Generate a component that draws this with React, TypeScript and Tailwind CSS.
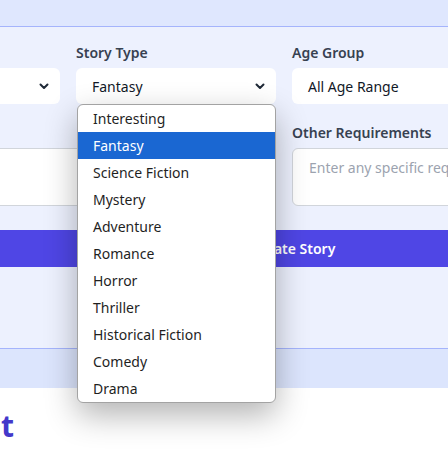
import type { ReactNode } from 'react';

const storyTypes = [
  'Interesting',
  'Fantasy',
  'Science Fiction',
  'Mystery',
  'Adventure',
  'Romance',
  'Horror',
  'Thriller',
  'Historical Fiction',
  'Comedy',
  'Drama',
];

function Chevron() {
  return (
    <svg width="12" height="12" viewBox="0 0 12 12" className="shrink-0">
      <path d="M2.5 4.5 6 8l3.5-3.5" fill="none" stroke="#1f2937" strokeWidth="2" strokeLinecap="round" strokeLinejoin="round" />
    </svg>
  );
}

function Field({ label, children, className = '' }: { label?: string; children: ReactNode; className?: string }) {
  return (
    <div className={`flex flex-col ${className}`}>
      <label className="mb-[5px] h-[21px] whitespace-nowrap text-[14px] font-semibold leading-[21px] text-[#374151]">{label}</label>
      {children}
    </div>
  );
}

function SelectBox({ value, chevron = true }: { value: string; chevron?: boolean }) {
  return (
    <div className="flex h-[36px] items-center justify-between rounded-md bg-white pl-4 pr-[10px] text-[14px] text-[#111827]">
      <span>{value}</span>
      {chevron && <Chevron />}
    </div>
  );
}

export default function App() {
  return (
    <div className="relative h-[459px] w-[448px] overflow-hidden bg-white font-['Noto_Sans',sans-serif]">
      <div className="h-[27px] border-b border-[#a5b4fc] bg-[#dfe7fe]" />
      <section className="h-[321px] bg-[#edf1fe]">
        <div className="ml-[-140px] w-[848px] pt-[15px]">
          <div className="grid grid-cols-4 gap-x-4">
            <Field label="Genre">
              <SelectBox value="Kids" />
            </Field>
            <Field label="Story Type">
              <SelectBox value="Fantasy" />
            </Field>
            <Field label="Age Group">
              <SelectBox value="All Age Range" />
            </Field>
            <Field label="Length">
              <SelectBox value="Short" />
            </Field>
          </div>
          <div className="mt-[18px] grid grid-cols-2 gap-x-4">
            <Field label="Story Prompt">
              <div className="h-[58px] rounded-md border border-[#d1d5db] bg-white" />
            </Field>
            <Field label="Other Requirements">
              <div className="h-[58px] overflow-hidden whitespace-nowrap rounded-md border border-[#d1d5db] bg-white px-4 py-[8px] text-[14px] text-[#9ca3af]">
                Enter any specific requirements for your story...
              </div>
            </Field>
          </div>
          <button className="mt-[24px] flex h-[37px] w-full items-center justify-center rounded-md bg-[#4f46e5] text-[14px] font-semibold text-white">
            Generate Story
          </button>
        </div>
      </section>
      <div className="h-[40px] border-t border-[#a5b4fc] bg-[#dce5fd]" />
      <div className="bg-white">
        <h2 className="ml-[-80px] mt-[18px] text-[30px] font-bold leading-[40px] text-[#4338ca]">Result</h2>
      </div>

      <ul className="absolute left-[77px] top-[104px] w-[199px] overflow-hidden rounded-md border border-[#a3a3a3] bg-white shadow-[0_12px_32px_rgba(0,0,0,0.3)]">
        {storyTypes.map((t) => (
          <li
            key={t}
            className={`flex h-[27px] items-center pl-[15px] text-[14px] ${t === 'Fantasy' ? 'bg-[#1a67d2] text-white' : 'text-[#1f1f1f]'}`}
          >
            {t}
          </li>
        ))}
      </ul>
    </div>
  );
}
